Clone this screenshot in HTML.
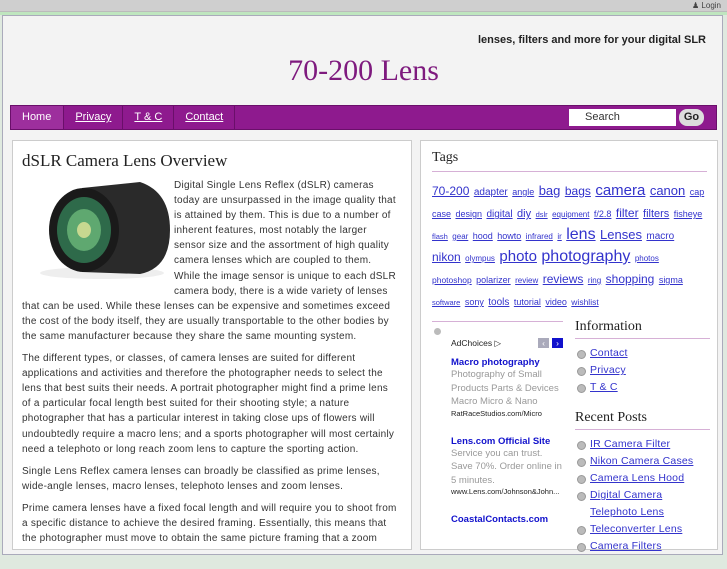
<!DOCTYPE html>
<html><head><style>
*{margin:0;padding:0;box-sizing:border-box}
body{width:727px;height:545px;overflow:hidden;background:#dfe9df;font-family:"Liberation Sans",sans-serif;position:relative}
.top{position:absolute;left:0;top:0;width:727px;height:12px;background:#cfcfcf;border-bottom:1px solid #bbb}
.login{position:absolute;right:6px;top:1px;font-size:8px;color:#444}
.green{position:absolute;left:0;top:12px;width:727px;height:3px;background:#bfe6bf}
.frame{position:absolute;left:2px;top:15px;width:721px;height:540px;background:#f3f3f3;border:1px solid #aab}
.tag{position:absolute;right:21px;top:34px;font-size:11px;font-weight:bold;color:#222}
.title{position:absolute;left:0;width:727px;text-align:center;top:54px;font-family:"Liberation Serif",serif;font-size:30px;color:#7e1a7e}
.nav{position:absolute;left:10px;top:105px;width:707px;height:25px;background:#8e1a8e;border:1px solid #6a0f6a}
.nav a{float:left;height:23px;line-height:23px;font-size:11px;color:#fff;padding:0 11px;border-right:1px solid #6a0f6a;text-decoration:underline}
.nav a.h{background:#9d2f9d;text-decoration:none;padding:0 12px 0 11px}
.search{position:absolute;left:558px;top:3px;width:107px;height:17px;background:#fff;font-size:11px;color:#333;padding-left:16px;line-height:17px}
.go{position:absolute;left:668px;top:3px;width:25px;height:17px;background:#ddd;border-radius:8px;font-size:11px;font-weight:bold;text-align:center;line-height:17px;color:#222}
.lp{position:absolute;left:12px;top:140px;width:400px;height:410px;background:#fff;border:1px solid #ccc}
.lp h1{font-family:"Liberation Serif",serif;font-weight:normal;font-size:17px;color:#222;position:absolute;left:9px;top:10px}
.txt{position:absolute;left:9px;top:37px;width:384px;font-size:10px;letter-spacing:0.25px;line-height:15.1px;color:#333;white-space:nowrap}
.txt p{margin-bottom:7px}
.img{float:left;width:152px;height:107px;position:relative}
.rp{position:absolute;left:420px;top:140px;width:298px;height:410px;background:#fff;border:1px solid #ccc}
.rp h2{font-family:"Liberation Serif",serif;font-weight:normal;font-size:14px;color:#222}
.tags{position:absolute;left:11px;top:40px;width:275px;line-height:20px;color:#33c}
.tags a{color:#33c;font-size:9px}
a{color:#33c;text-decoration:underline}
.col2{position:absolute;left:154px;top:178px;width:135px}
.col2 h2{border-bottom:1px solid #d6b0d6;padding-bottom:3px;margin-bottom:6px}
.col2 ul{list-style:none;font-size:10.5px;letter-spacing:0.2px;line-height:17px;margin-bottom:14px}
.col2 li{padding-left:15px;position:relative}
.col2 li:before{content:"";position:absolute;left:2px;top:5px;width:7px;height:7px;border-radius:50%;background:#bbb;border:1px solid #999}
.ads{position:absolute;left:11px;top:180px;width:131px;border-top:1px solid #d6b0d6;font-size:9.5px}
.ads .t{color:#11c;font-weight:bold;margin-top:8px}
.ads .d{color:#999;line-height:13.5px}
.ads .u{color:#222;font-size:7.5px}
</style></head><body>
<div class="top"><span class="login">&#9823; Login</span></div>
<div class="green"></div>
<div class="frame"></div>
<div class="tag">lenses, filters and more for your digital SLR</div>
<div class="title">70-200 Lens</div>
<div class="nav"><a class="h">Home</a><a>Privacy</a><a>T &amp; C</a><a>Contact</a>
<div class="search">Search</div><div class="go">Go</div></div>
<div class="lp"><h1>dSLR Camera Lens Overview</h1>
<div class="txt">
<p><span class="img"><svg width="152" height="107" viewBox="0 0 152 107"><ellipse cx="80" cy="95" rx="62" ry="6" fill="#eee"/><path d="M60 10 L118 4 Q148 14 148 52 Q148 90 118 96 L60 94Z" fill="#2a2a2a"/><ellipse cx="62" cy="52" rx="35" ry="42" fill="#1a1a1a"/><ellipse cx="62" cy="52" rx="27" ry="33" fill="#2e6a4a"/><ellipse cx="62" cy="52" rx="17" ry="21" fill="#5fa870"/><ellipse cx="62" cy="52" rx="7" ry="8" fill="#c8d890"/></svg></span>Digital Single Lens Reflex (dSLR) cameras<br>today are unsurpassed in the image quality that<br>is attained by them. This is due to a number of<br>inherent features, most notably the larger<br>sensor size and the assortment of high quality<br>camera lenses which are coupled to them.<br>While the image sensor is unique to each dSLR<br>camera body, there is a wide variety of lenses<br>that can be used. While these lenses can be expensive and sometimes exceed<br>the cost of the body itself, they are usually transportable to the other bodies by<br>the same manufacturer because they share the same mounting system.</p>
<p>The different types, or classes, of camera lenses are suited for different<br>applications and activities and therefore the photographer needs to select the<br>lens that best suits their needs. A portrait photographer might find a prime lens<br>of a particular focal length best suited for their shooting style; a nature<br>photographer that has a particular interest in taking close ups of flowers will<br>undoubtedly require a macro lens; and a sports photographer will most certainly<br>need a telephoto or long reach zoom lens to capture the sporting action.</p>
<p>Single Lens Reflex camera lenses can broadly be classified as prime lenses,<br>wide-angle lenses, macro lenses, telephoto lenses and zoom lenses.</p>
<p>Prime camera lenses have a fixed focal length and will require you to shoot from<br>a specific distance to achieve the desired framing. Essentially, this means that<br>the photographer must move to obtain the same picture framing that a zoom</p>
</div></div>
<div class="rp">
<h2 style="position:absolute;left:11px;top:9px;width:275px;border-bottom:1px solid #d6b0d6;padding-bottom:5px">Tags</h2>
<div class="tags"><a style="font-size:12px">70-200</a> <a style="font-size:10px">adapter</a> <a>angle</a> <a style="font-size:13px">bag</a> <a style="font-size:12px">bags</a> <a style="font-size:15px">camera</a> <a style="font-size:13px">canon</a> <a>cap</a> <a>case</a> <a>design</a> <a style="font-size:10px">digital</a> <a style="font-size:11px">diy</a> <a style="font-size:7.5px">dslr</a> <a style="font-size:8px">equipment</a> <a>f/2.8</a> <a style="font-size:12px">filter</a> <a style="font-size:11px">filters</a> <a>fisheye</a> <a style="font-size:7.5px">flash</a> <a style="font-size:8px">gear</a> <a>hood</a> <a>howto</a> <a style="font-size:8px">infrared</a> <a style="font-size:8px">ir</a> <a style="font-size:16px">lens</a> <a style="font-size:13px">Lenses</a> <a style="font-size:10px">macro</a> <a style="font-size:12px">nikon</a> <a style="font-size:8px">olympus</a> <a style="font-size:15px">photo</a> <a style="font-size:16px">photography</a> <a style="font-size:8px">photos</a><br><a style="font-size:8.5px">photoshop</a> <a>polarizer</a> <a style="font-size:8px">review</a> <a style="font-size:12px">reviews</a> <a style="font-size:8px">ring</a> <a style="font-size:12px">shopping</a> <a>sigma</a><br><a style="font-size:7.5px">software</a> <a>sony</a> <a style="font-size:10px">tools</a> <a>tutorial</a> <a>video</a> <a style="font-size:8.5px">wishlist</a></div>
<div class="ads"><div style="position:absolute;left:2px;top:6px;width:7px;height:7px;border-radius:50%;background:#bbb"></div>
<div style="margin-left:19px"><div style="margin-top:16px;font-size:8.5px;color:#222">AdChoices &#9655;<span style="float:right;background:#1111cc;color:#fff;width:11px;text-align:center;margin-left:3px">&#8250;</span><span style="float:right;background:#aab;color:#fff;width:11px;text-align:center">&#8249;</span></div>
<div class="t">Macro photography</div><div class="d">Photography of Small Products Parts &amp; Devices Macro Micro &amp; Nano</div><div class="u">RatRaceStudios.com/Micro</div>
<div class="t" style="margin-top:18px">Lens.com Official Site</div><div class="d">Service you can trust. Save 70%. Order online in 5 minutes.</div><div class="u">www.Lens.com/Johnson&amp;John...</div>
<div class="t" style="margin-top:18px">CoastalContacts.com</div></div></div>
<div class="col2"><h2>Information</h2><ul><li><a>Contact</a></li><li><a>Privacy</a></li><li><a>T &amp; C</a></li></ul>
<h2>Recent Posts</h2><ul><li><a>IR Camera Filter</a></li><li><a>Nikon Camera Cases</a></li><li><a>Camera Lens Hood</a></li><li><a>Digital Camera Telephoto Lens</a></li><li><a>Teleconverter Lens</a></li><li><a>Camera Filters</a></li></ul></div>
</div>
</body></html>
